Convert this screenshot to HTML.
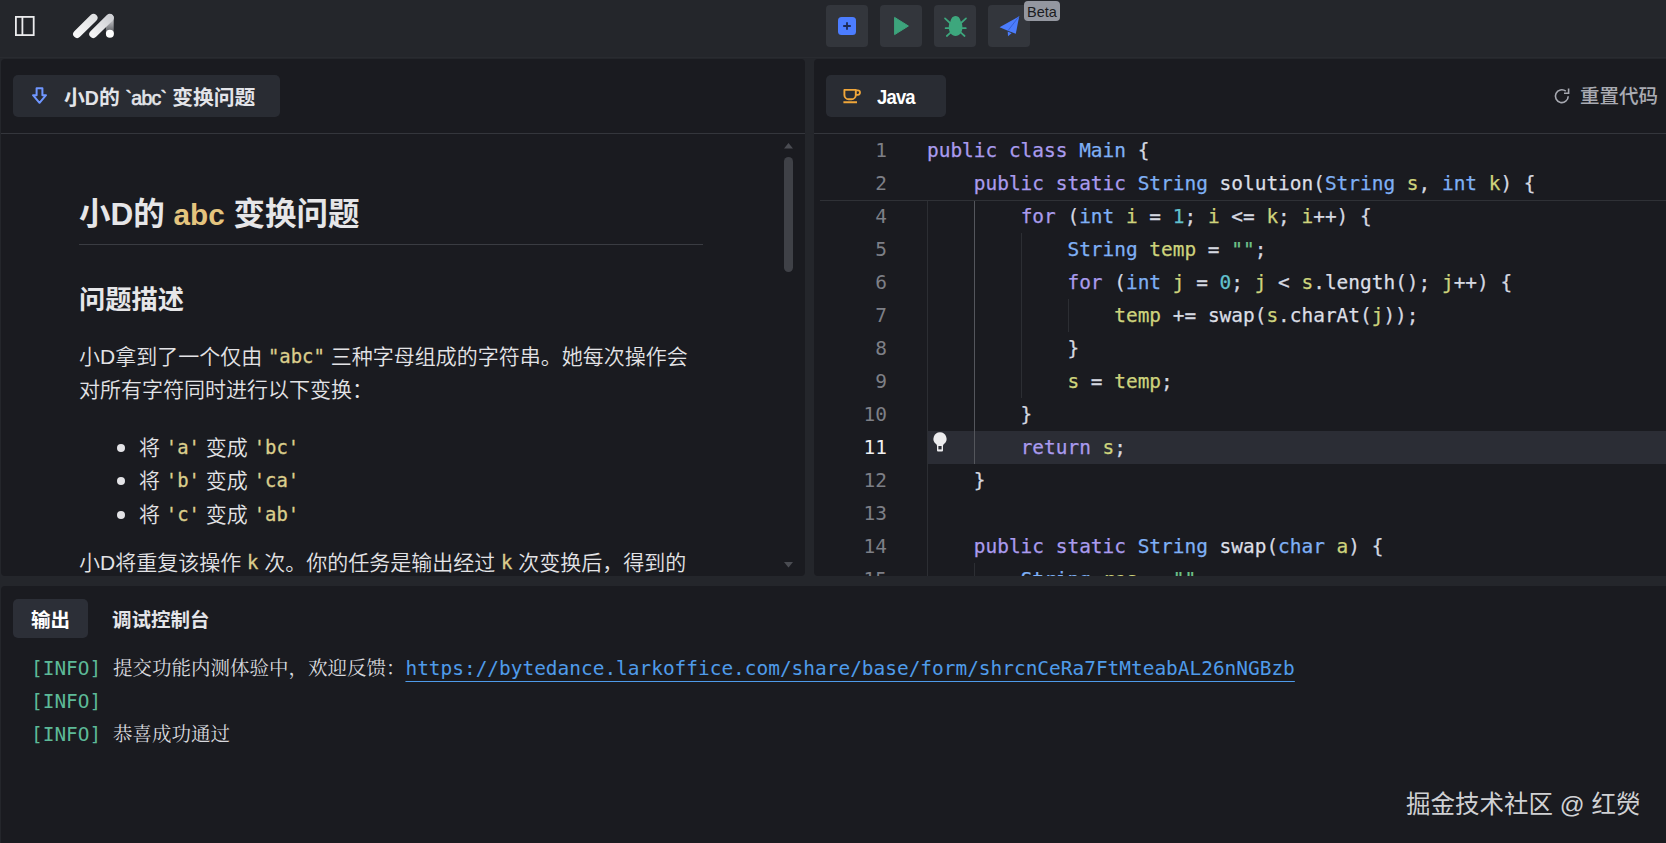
<!DOCTYPE html>
<html lang="zh-CN">
<head>
<meta charset="utf-8">
<title>小D的 abc 变换问题</title>
<style>
*{box-sizing:border-box;margin:0;padding:0}
html,body{width:1666px;height:843px;overflow:hidden;background:#24262b}
body{position:relative;font-family:"Liberation Sans","Noto Sans CJK SC",sans-serif;color:#e3e3e6}
.abs{position:absolute}
.panel{position:absolute;background:#1a1b20;border-radius:4px;overflow:hidden}
#left{left:1px;top:59px;width:804px;height:517px}
#right{left:814px;top:59px;width:856px;height:517px;border-radius:4px 0 0 4px}
#bottom{left:1px;top:586px;width:1670px;height:262px;border-radius:4px 0 0 0}
.tab{position:absolute;background:#292c33;border-radius:5px;font-weight:700;white-space:nowrap}
.hr{position:absolute;height:1px;background:#34363c}
.tbtn{position:absolute;top:5px;width:42px;height:42px;border-radius:4px;background:#33363c}
.tabtxt{font-weight:700;font-size:19.5px;line-height:42px;color:#e3e4e9;white-space:nowrap}
#doc h1{position:absolute;left:0;top:193.5px;font-size:31.5px;line-height:40px;font-weight:700;color:#e6e6e8;white-space:nowrap;width:624px;height:51.5px;border-bottom:1px solid #3a3c42}
#doc h2{position:absolute;left:0;top:283px;font-size:26.25px;line-height:34px;font-weight:700;color:#e6e6e8;white-space:nowrap}
#doc p{position:absolute;left:0;font-size:21px;font-weight:350;line-height:33.6px;color:#e3e3e6;white-space:nowrap}
#doc ul{position:absolute;left:60px;list-style:none;font-size:21px;font-weight:350;line-height:33.6px;color:#e3e3e6;white-space:nowrap}
#doc li{position:relative}
#doc li:before{content:"";position:absolute;left:-22px;top:13px;width:8px;height:8px;border-radius:50%;background:#e3e3e6}
#doc code{font-family:"DejaVu Sans Mono","Liberation Mono",monospace;font-size:18.9px;color:#dbce8c;line-height:1;position:relative;top:-1px;-webkit-text-stroke:0.3px}
#doc code.hc{font-family:"Liberation Sans",sans-serif;font-size:29.7px;color:#e4c47e;top:0;-webkit-text-stroke:0}
.ln.cur{color:#f0f0f2}
.btab{font-weight:700;font-size:19.5px;line-height:40px;white-space:nowrap}
.con{position:absolute;left:31px;height:33px;line-height:33px;font-family:"DejaVu Sans Mono","Liberation Mono",monospace;font-size:19.45px;white-space:pre;color:#d8d9de}
.con .i{color:#5dba98}
.con .z{font-family:"Liberation Serif","Noto Serif CJK SC",serif;font-size:19.5px}
.con .u{color:#4f9bea;text-decoration:underline;text-underline-offset:5.5px;text-decoration-thickness:1px}
.tl{font-size:19.5px;font-weight:400;-webkit-text-stroke:0.6px;letter-spacing:-0.7px}
/* code */
.code{position:absolute;left:0;top:0;font-family:"Liberation Mono",monospace;font-size:19.58px;white-space:pre;color:#d5d8e0}
.ln{position:absolute;width:60px;text-align:right;font-family:"DejaVu Sans Mono","Liberation Mono",monospace;font-size:19.45px;color:#7d7f86;height:33px;line-height:33px}
.cl{position:absolute;left:113px;height:33px;line-height:33px;font-family:"DejaVu Sans Mono","Liberation Mono",monospace;font-size:19.45px;white-space:pre;color:#d5d8e0;-webkit-text-stroke:0.25px}
.k{color:#aa9bee}.t{color:#7fb0f5}.v{color:#ced37c}.n{color:#62c1cd}.s{color:#6ec28a}.f{color:#dcdfe6}
.guide{position:absolute;width:1px;background:#2c2e33}
</style>
</head>
<body>
<!-- top bar -->
<div id="topbar" class="abs" style="left:0;top:0;width:1666px;height:58px">
<svg class="abs" style="left:14px;top:15px" width="22" height="22" viewBox="0 0 22 22"><rect x="1.9" y="1.9" width="17.8" height="18.2" fill="none" stroke="#ececee" stroke-width="1.8"/><line x1="8.4" y1="2" x2="8.4" y2="20" stroke="#ececee" stroke-width="1.8"/></svg>
<svg class="abs" style="left:66px;top:6px" width="56" height="40" viewBox="0 0 56 40">
<defs><linearGradient id="lg1" gradientUnits="userSpaceOnUse" x1="11" y1="28" x2="27.5" y2="12"><stop offset="0" stop-color="#f7f7f8"/><stop offset="1" stop-color="#e0e1e3"/></linearGradient>
<linearGradient id="lg3" gradientUnits="userSpaceOnUse" x1="27" y1="28" x2="43.7" y2="12"><stop offset="0" stop-color="#f4f4f5"/><stop offset="1" stop-color="#cfd0d4"/></linearGradient>
<linearGradient id="lg2" gradientUnits="userSpaceOnUse" x1="0" y1="12" x2="0" y2="27"><stop offset="0" stop-color="#cfd0d4"/><stop offset="1" stop-color="#cfd0d4" stop-opacity="0.3"/></linearGradient></defs>
<line x1="11.15" y1="28" x2="27.5" y2="11.9" stroke="url(#lg1)" stroke-width="8" stroke-linecap="round"/>
<path d="M43.7 8 Q47.7 8 47.7 12 L47.7 27.8 L39.9 27.8 L39.9 19 Z" fill="url(#lg2)"/>
<line x1="27.3" y1="28" x2="43.7" y2="11.9" stroke="url(#lg3)" stroke-width="8" stroke-linecap="round"/>
<circle cx="43.9" cy="27.8" r="4" fill="#ffffff"/>
</svg>
<div class="tbtn" style="left:826px"><svg width="42" height="42" viewBox="0 0 42 42"><rect x="12" y="12" width="18" height="18" rx="3.5" fill="#4c7dff"/><path d="M21 17.2v7.6M17.2 21h7.6" stroke="#1d2a55" stroke-width="1.8"/></svg></div>
<div class="tbtn" style="left:880px"><svg width="42" height="42" viewBox="0 0 42 42"><path d="M14.6 12.4 L28.4 21 L14.6 29.6 Z" fill="#3da47c" stroke="#3da47c" stroke-width="1" stroke-linejoin="round"/></svg></div>
<div class="tbtn" style="left:934px"><svg width="42" height="42" viewBox="0 0 42 42"><g fill="#3da77d" stroke="#3da77d" stroke-linecap="round"><path d="M21.6 11 C25.6 11 26.2 15 26.8 16.4 C28.4 18.6 28.4 21 28.4 22.6 C28.4 27.4 25.6 31 21.6 31 C17.6 31 14.8 27.4 14.8 22.6 C14.8 21 14.8 18.6 16.4 16.4 C17 15 17.6 11 21.6 11 Z" stroke="none"/><path d="M11 13.4l5 4.6M32 13.4l-5 4.6M11.6 23.2h4M31.8 23.2h-4M12.8 31l4-3.6M30.6 31l-4-3.6" stroke-width="1.7" fill="none"/></g></svg></div>
<div class="tbtn" style="left:988px"><svg width="42" height="42" viewBox="0 0 42 42"><path d="M31.2 11.2 L11.6 22.3 L19.9 25.7 L27.8 28.8 Z" fill="#4b7cfc"/><path d="M31.2 11.2 L19.9 25.7" stroke="#2f55c4" stroke-width="0.7" fill="none"/><path d="M19.7 26.6 L20 31.2 L23.6 28.2 Z" fill="#4b7cfc"/></svg></div>
<div class="abs" style="left:1024px;top:1px;width:36px;height:20px;border-radius:4px;background:#9497a0;color:#1b1c21;font-size:14.5px;line-height:22px;text-align:center">Beta</div>
</div>
<div class="abs" style="left:0;top:57px;width:1666px;height:1px;background:#292b30"></div>
<div id="left" class="panel">
<div class="tab" style="left:12px;top:16px;width:267px;height:42px"></div>
<svg class="abs" style="left:28px;top:26px" width="22" height="22" viewBox="0 0 22 22"><path d="M7.6 3.2 h5.8 v7 h3.6 L10.5 17.8 L4 10.2 h3.6 Z" fill="none" stroke="#6f96ff" stroke-width="2" stroke-linejoin="round"/></svg>
<div class="abs tabtxt" style="left:63px;top:17.5px;font-size:20.8px">小<span style="font-size:19.5px">D</span>的 <span class="tl">`abc`</span> 变换问题</div>
<div class="hr" style="left:0;top:74px;width:804px"></div>
<div id="doc" class="abs" style="left:78px;top:-59px;width:624px">
<h1>小D的 <code class="hc">abc</code> 变换问题</h1>
<h2>问题描述</h2>
<p style="top:339.5px">小D拿到了一个仅由 <code>"abc"</code> 三种字母组成的字符串。她每次操作会<br>对所有字符同时进行以下变换：</p>
<ul style="top:430.5px">
<li>将 <code>'a'</code> 变成 <code>'bc'</code></li>
<li>将 <code>'b'</code> 变成 <code>'ca'</code></li>
<li>将 <code>'c'</code> 变成 <code>'ab'</code></li>
</ul>
<p style="top:545.5px">小D将重复该操作 <code>k</code> 次。你的任务是输出经过 <code>k</code> 次变换后，得到的</p>
</div>
<div class="abs" style="left:783px;top:98px;width:9px;height:115px;border-radius:5px;background:#3f4147"></div>
<svg class="abs" style="left:782px;top:83px" width="11" height="8" viewBox="0 0 11 8"><path d="M1 6.5 L5.5 1 L10 6.5 Z" fill="#4a4c52"/></svg>
<svg class="abs" style="left:782px;top:502px" width="11" height="8" viewBox="0 0 11 8"><path d="M1 1 L5.5 6.5 L10 1 Z" fill="#4a4c52"/></svg>
</div>
<div id="right" class="panel"><div id="rin" class="abs" style="left:-814px;top:-59px;width:1666px;height:843px">
<div class="tab" style="left:826px;top:75px;width:120px;height:42px"></div>
<svg class="abs" style="left:841px;top:86px" width="22" height="20" viewBox="0 0 22 20"><path d="M3.4 3.9 h11.4 v5 a4.3 4.3 0 0 1 -4.3 4.3 h-2.8 a4.3 4.3 0 0 1 -4.3 -4.3 Z" fill="none" stroke="#f0a63a" stroke-width="1.9" stroke-linejoin="round"/><path d="M14.8 4.4 h2 a2.2 2.2 0 0 1 0 4.4 h-2" fill="none" stroke="#f0a63a" stroke-width="1.8"/><path d="M2.4 16.2 h13.6" stroke="#f0a63a" stroke-width="1.9"/></svg>
<div class="abs tabtxt" style="left:877px;top:75.5px;color:#fff;letter-spacing:-0.9px;font-size:20.5px;transform:scaleX(0.9);transform-origin:left center">Java</div>
<svg class="abs" style="left:1552px;top:86px" width="20" height="20" viewBox="0 0 20 20"><path d="M16.2 10.2 a6.4 6.4 0 1 1 -2.4 -5" fill="none" stroke="#a6a8b0" stroke-width="1.6"/><path d="M16.6 2.6 v4.6 h-4.6" fill="none" stroke="#a6a8b0" stroke-width="1.6"/></svg>
<div class="abs" style="left:1580px;top:75px;font-size:19.5px;font-weight:500;line-height:42px;color:#a9abb3;white-space:nowrap">重置代码</div>
<div class="hr" style="left:814px;top:133px;width:852px"></div>
<div class="abs" style="left:927px;top:431px;width:739px;height:33px;background:#2b2d35"></div>
<div class="guide" style="left:927px;top:201px;height:375px"></div>
<div class="guide" style="left:974px;top:201px;height:263px;background:#54565c"></div>
<div class="guide" style="left:974px;top:563px;height:20px"></div>
<div class="guide" style="left:1021px;top:233px;height:165px"></div>
<div class="guide" style="left:1068px;top:299px;height:33px"></div>
<div class="ln" style="left:827px;top:134px">1</div><div class="cl" style="left:927px;top:134px"><span class="k">public</span> <span class="k">class</span> <span class="t">Main</span> {</div>
<div class="ln" style="left:827px;top:167px">2</div><div class="cl" style="left:927px;top:167px">    <span class="k">public</span> <span class="k">static</span> <span class="t">String</span> <span class="f">solution</span>(<span class="t">String</span> <span class="v">s</span>, <span class="t">int</span> <span class="v">k</span>) {</div>
<div class="ln" style="left:827px;top:200px">4</div><div class="cl" style="left:927px;top:200px">        <span class="k">for</span> (<span class="t">int</span> <span class="v">i</span> = <span class="n">1</span>; <span class="v">i</span> &lt;= <span class="v">k</span>; <span class="v">i</span>++) {</div>
<div class="ln" style="left:827px;top:233px">5</div><div class="cl" style="left:927px;top:233px">            <span class="t">String</span> <span class="v">temp</span> = <span class="s">""</span>;</div>
<div class="ln" style="left:827px;top:266px">6</div><div class="cl" style="left:927px;top:266px">            <span class="k">for</span> (<span class="t">int</span> <span class="v">j</span> = <span class="n">0</span>; <span class="v">j</span> &lt; <span class="v">s</span>.<span class="f">length</span>(); <span class="v">j</span>++) {</div>
<div class="ln" style="left:827px;top:299px">7</div><div class="cl" style="left:927px;top:299px">                <span class="v">temp</span> += <span class="f">swap</span>(<span class="v">s</span>.<span class="f">charAt</span>(<span class="v">j</span>));</div>
<div class="ln" style="left:827px;top:332px">8</div><div class="cl" style="left:927px;top:332px">            }</div>
<div class="ln" style="left:827px;top:365px">9</div><div class="cl" style="left:927px;top:365px">            <span class="v">s</span> = <span class="v">temp</span>;</div>
<div class="ln" style="left:827px;top:398px">10</div><div class="cl" style="left:927px;top:398px">        }</div>
<div class="ln cur" style="left:827px;top:431px">11</div><div class="cl" style="left:927px;top:431px">        <span class="k">return</span> <span class="v">s</span>;</div>
<div class="ln" style="left:827px;top:464px">12</div><div class="cl" style="left:927px;top:464px">    }</div>
<div class="ln" style="left:827px;top:497px">13</div><div class="cl" style="left:927px;top:497px"></div>
<div class="ln" style="left:827px;top:530px">14</div><div class="cl" style="left:927px;top:530px">    <span class="k">public</span> <span class="k">static</span> <span class="t">String</span> <span class="f">swap</span>(<span class="t">char</span> <span class="v">a</span>) {</div>
<div class="ln" style="left:827px;top:563px">15</div><div class="cl" style="left:927px;top:563px">        <span class="t">String</span> <span class="v">res</span> = <span class="s">""</span>;</div>
<div class="abs" style="left:820px;top:200px;width:846px;height:1px;background:#2f3136"></div>
<svg class="abs" style="left:931px;top:431px" width="18" height="22" viewBox="0 0 18 22"><path d="M9 1.2 a6.6 6.6 0 0 1 4 11.8 c-0.8 0.7 -1 1.4 -1 2.4 v4.2 a1 1 0 0 1 -1 1 h-4 a1 1 0 0 1 -1 -1 v-4.2 c0 -1 -0.2 -1.7 -1 -2.4 a6.6 6.6 0 0 1 4 -11.8 Z" fill="#ececee"/><rect x="7.4" y="15" width="3.2" height="3.4" fill="#2b2d35"/></svg>
</div></div>
<div id="bottom" class="panel"><div class="abs" style="left:-1px;top:-586px;width:1666px;height:843px">
<div class="tab" style="left:13px;top:599px;width:75px;height:39px;background:#2c2f37"></div>
<div class="abs btab" style="left:31px;top:600px;color:#fff">输出</div>
<div class="abs btab" style="left:112px;top:600px;color:#e4e5e9">调试控制台</div>
<div class="con" style="top:652px"><span class="i">[INFO]</span> <span class="z">提交功能内测体验中，欢迎反馈：</span><span class="u">https://bytedance.larkoffice.com/share/base/form/shrcnCeRa7FtMteabAL26nNGBzb</span></div>
<div class="con" style="top:685px"><span class="i">[INFO]</span></div>
<div class="con" style="top:718px"><span class="i">[INFO]</span> <span class="z">恭喜成功通过</span></div>
<div class="abs" style="left:1406px;top:787px;font-size:24.5px;line-height:36px;color:#d0d1d4;white-space:nowrap">掘金技术社区 @ 红熒</div>
</div></div>
</body>
</html>
